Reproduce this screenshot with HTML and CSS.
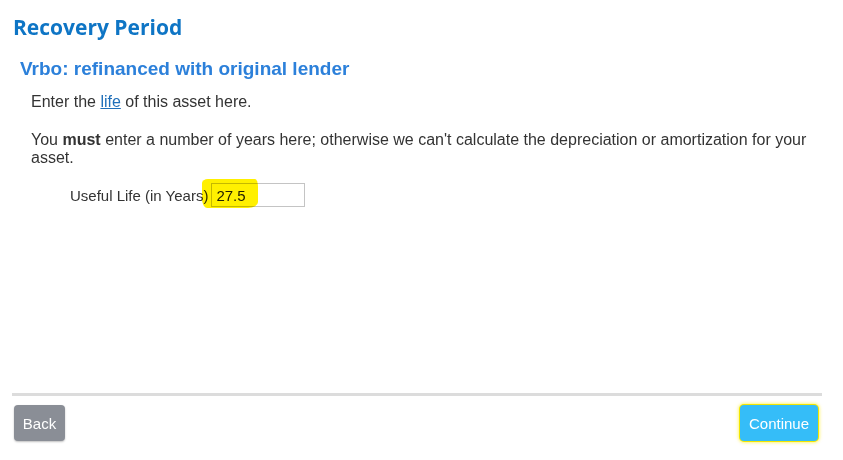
FILE: index.html
```html
<!DOCTYPE html>
<html lang="en">
<head>
    <meta charset="UTF-8">
    <title>Recovery Period</title>
    <link rel="stylesheet" href="styles.css">
</head>
<body>
    <div class="wizard">
        <div class="content">
            <h1 class="pageTitle">Recovery Period</h1>
            <h2 class="assetName">Vrbo: refinanced with original lender</h2>

            <div class="copy">
                <p>Enter the <a href="#">life</a> of this asset here.</p>
                <p>You <b>must</b> enter a number of years here; otherwise we can't calculate the depreciation or amortization for your asset.</p>
            </div>

            <div class="fieldRow">
                <label for="usefulLife">Useful Life (in Years)</label>
                <span class="inputWrap">
                    <input type="text" id="usefulLife" value="27.5">
                    <span class="marker"></span>
                </span>
            </div>
        </div>

        <div class="footer">
            <div class="divider"></div>
            <div class="navButtons">
                <button class="navBtn backBtn">Back</button>
                <button class="navBtn continueBtn">Continue</button>
            </div>
        </div>
    </div>
</body>
</html>
```

FILE: styles.css
```css
body {
    margin: 0;
    font-family: "Liberation Sans", Arial, sans-serif;
    color: #333;
    background-color: white;
}

.wizard {
    height: 460px;
    display: flex;
    flex-direction: column;
}

.content {
    flex-grow: 1;
}

.pageTitle {
    margin: 0;
    padding: 13px 0 0 13px;
    font-family: "Open Sans", Lato, sans-serif;
    font-weight: 700;
    font-size: 21px;
    line-height: 28px;
    color: #0e75c5;
}

.assetName {
    margin: 0;
    padding: 17px 0 0 20px;
    font-size: 19px;
    line-height: 22px;
    font-weight: bold;
    color: #2c80da;
}

.copy {
    padding: 0 21px 0 31px;
    font-size: 16px;
    line-height: 18px;
}

.copy p {
    margin: 13px 0 0 0;
}

.copy p + p {
    margin-top: 20px;
}

.copy a {
    color: #1f6fb9;
    text-decoration: underline;
}

.fieldRow {
    padding: 16px 0 0 70px;
    display: flex;
    align-items: center;
    gap: 3px;
    font-size: 15px;
}

.inputWrap {
    position: relative;
    display: inline-block;
}

.inputWrap input {
    width: 94px;
    height: 24px;
    box-sizing: border-box;
    border: 1px solid #c4c4c4;
    padding: 0 4px;
    font-family: "Liberation Sans", Arial, sans-serif;
    font-size: 15px;
    color: #222;
    background-color: white;
}

.marker {
    position: absolute;
    left: -9px;
    top: -4px;
    width: 56px;
    height: 29px;
    background-color: #fff000;
    border-radius: 6px 3px 10px 5px / 4px 8px 6px 9px;
    mix-blend-mode: multiply;
    pointer-events: none;
}

.footer {
    padding: 0 21px 19px 12px;
}

.divider {
    height: 3px;
    background-color: #dcdcdc;
}

.navButtons {
    display: flex;
    justify-content: space-between;
    padding: 9px 4px 0 2px;
}

.navBtn {
    height: 36px;
    border: none;
    border-radius: 4px;
    color: white;
    font-family: "Liberation Sans", Arial, sans-serif;
    font-size: 15px;
    cursor: pointer;
}

.backBtn {
    width: 51px;
    background-color: #8a8e96;
    box-shadow: 0 1px 2px rgba(0, 0, 0, 0.25);
}

.continueBtn {
    width: 78px;
    background-color: #35bdf8;
    box-shadow: 0 0 0 1px #f3e600, 0 0 3px 2px rgba(255, 240, 0, 0.5);
}
```
